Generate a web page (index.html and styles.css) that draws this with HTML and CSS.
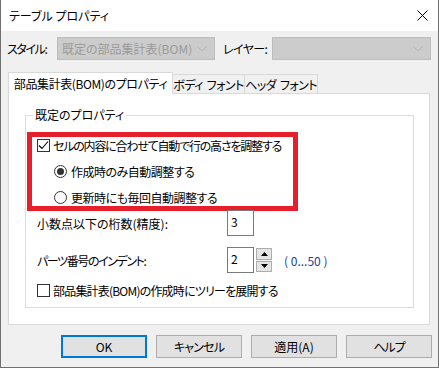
FILE: index.html
```html
<!DOCTYPE html>
<html lang="ja">
<head>
  <meta charset="UTF-8" />
  <title>テーブル プロパティ</title>
  <link rel="stylesheet" href="styles.css">
</head>
<body>
  <div class="window">
    <div class="titlebar">
      <span class="title">テーブル プロパティ</span>
      <svg class="close" width="11" height="11" viewBox="0 0 11 11">
        <path d="M0.5 0.5 L10.5 10.5 M10.5 0.5 L0.5 10.5" stroke="#000" stroke-width="1" fill="none" />
      </svg>
    </div>

    <div class="toolbar">
      <span class="label style-label">スタイル:</span>
      <div class="combo combo-style">
        <span>既定の部品集計表(BOM)</span>
        <svg width="10" height="6" viewBox="0 0 10 6"><path d="M0.5 0.5 L5 5 L9.5 0.5" stroke="#b4b4b4" fill="none" /></svg>
      </div>
      <span class="label layer-label">レイヤー:</span>
      <div class="combo combo-layer">
        <span></span>
        <svg width="10" height="6" viewBox="0 0 10 6"><path d="M0.5 0.5 L5 5 L9.5 0.5" stroke="#b4b4b4" fill="none" /></svg>
      </div>
    </div>

    <div class="tabs">
      <div class="tab active">部品集計表(BOM)のプロパティ</div>
      <div class="tab tab-body">ボディ<span class="gap"></span>フォント</div>
      <div class="tab tab-head">ヘッダ<span class="gap"></span>フォント</div>
    </div>

    <div class="panel">
      <fieldset class="group">
        <legend>既定のプロパティ</legend>

        <div class="highlight">
          <div class="row main">
            <span class="check checked">
              <svg width="11" height="11" viewBox="0 0 11 11"><path d="M1 5.5 L4 8.5 L10 1.5" stroke="#000" stroke-width="1.1" fill="none" /></svg>
            </span>
            <span>セルの内容に合わせて自動で行の高さを調整する</span>
          </div>
          <div class="row sub">
            <span class="radio on"><span class="dot"></span></span>
            <span>作成時のみ自動調整する</span>
          </div>
          <div class="row sub">
            <span class="radio"></span>
            <span>更新時にも毎回自動調整する</span>
          </div>
        </div>

        <div class="field">
          <span class="field-label">小数点以下の桁数(精度):</span>
          <div class="textbox">3</div>
        </div>

        <div class="field field-indent">
          <span class="field-label"><span class="narrow">パーツ番号のインデント:</span></span>
          <div class="textbox">2</div>
          <div class="spin">
            <div class="spin-btn"><svg width="7" height="4" viewBox="0 0 7 4"><path d="M0 4 L3.5 0 L7 4 Z" fill="#000" /></svg></div>
            <div class="spin-btn"><svg width="7" height="4" viewBox="0 0 7 4"><path d="M0 0 L3.5 4 L7 0 Z" fill="#000" /></svg></div>
          </div>
          <span class="range">( 0...50 )</span>
        </div>

        <div class="row tree">
          <span class="check"></span>
          <span>部品集計表(BOM)の作成時にツリーを展開する</span>
        </div>
      </fieldset>
    </div>

    <div class="buttons">
      <button class="btn default">OK</button>
      <button class="btn btn-cancel">キャンセル</button>
      <button class="btn">適用(A)</button>
      <button class="btn btn-help">ヘルプ</button>
    </div>
  </div>
</body>
</html>
```

FILE: styles.css
```css
* {
  margin: 0;
  padding: 0;
  box-sizing: border-box;
}

body {
  font-family: "Noto Sans CJK JP", "Noto Sans", sans-serif;
  font-size: 12px;
  font-feature-settings: "palt";
  color: #000;
  background: #fff;
  white-space: nowrap;
}

.window {
  width: 439px;
  height: 368px;
  background: #f0f0f0;
  border: 1px solid #707070;
  border-top: none;
  display: flex;
  flex-direction: column;
}

.titlebar {
  height: 31px;
  background: #fff;
  display: flex;
  align-items: center;
  justify-content: space-between;
  padding: 0 10px 0 8px;
}

.close {
  display: block;
}

.toolbar {
  display: flex;
  align-items: center;
  height: 23px;
  margin-top: 6px;
  padding-left: 6px;
}

.style-label {
  width: 50px;
  letter-spacing: -1.4px;
}

.layer-label {
  margin-left: 8px;
  width: 49px;
  letter-spacing: -0.6px;
}

.combo {
  height: 23px;
  background: #cccccc;
  border: 1px solid #bcbcbc;
  display: flex;
  align-items: center;
  justify-content: space-between;
  padding: 0 7px 0 4px;
  color: #9a9a9a;
}

.combo-style {
  width: 158px;
}

.combo-layer {
  width: 159px;
}

.tabs {
  display: flex;
  align-items: flex-end;
  margin-top: 11px;
  padding-left: 7px;
  height: 22px;
}

.tab {
  height: 19px;
  border: 1px solid #d9d9d9;
  border-bottom: none;
  background: #f0f0f0;
  display: flex;
  align-items: center;
  justify-content: center;
  margin-left: -1px;
  letter-spacing: -0.6px;
}

.tab .gap {
  display: inline-block;
  width: 4px;
}

.tab.active {
  height: 22px;
  width: 165px;
  margin-left: 0;
  background: #fff;
  position: relative;
  z-index: 1;
  margin-bottom: -1px;
  letter-spacing: -0.4px;
}

.tab-body {
  width: 73px;
}

.tab-head {
  width: 74px;
}

.panel {
  margin-left: 7px;
  width: 422px;
  height: 232px;
  background: #fff;
  border: 1px solid #d9d9d9;
  padding: 13px 15px 16px 16px;
}

.group {
  border: 1px solid #dcdcdc;
  height: 100%;
  padding: 0 0 0 1px;
}

.group legend {
  margin-left: 6px;
  padding: 0 2px;
  line-height: 16px;
}

.highlight {
  width: 271px;
  border: 5px solid #e5202a;
  margin-top: 9px;
  padding: 0 0 1px 5px;
}

.row {
  display: flex;
  align-items: center;
  height: 16px;
  gap: 3px;
}

.row.main {
  letter-spacing: -1.2px;
}

.row.sub {
  margin-top: 10px;
  padding-left: 17px;
  gap: 4px;
  letter-spacing: -0.5px;
}

.check {
  width: 13px;
  height: 13px;
  border: 1px solid #333;
  background: #fff;
  display: flex;
  align-items: center;
  justify-content: center;
  flex: none;
}

.radio {
  width: 13px;
  height: 13px;
  border: 1px solid #333;
  border-radius: 50%;
  background: #fff;
  display: flex;
  align-items: center;
  justify-content: center;
  flex: none;
}

.radio .dot {
  width: 7px;
  height: 7px;
  border-radius: 50%;
  background: #333;
}

.field {
  display: flex;
  align-items: center;
  height: 26px;
  padding-left: 10px;
  margin-top: -1px;
}

.field-indent {
  margin-top: 11px;
}

.field-label {
  width: 190px;
}

.narrow {
  letter-spacing: -1.4px;
}

.textbox {
  width: 27px;
  height: 26px;
  border: 1px solid #7a7a7a;
  background: #fff;
  padding: 2px 0 0 3px;
  line-height: 18px;
}

.spin {
  margin-left: 2px;
  width: 16px;
  height: 24px;
  display: flex;
  flex-direction: column;
  gap: 1px;
  background: #f0f0f0;
}

.spin-btn {
  flex: 1;
  background: #e5e5e5;
  border: 1px solid #adadad;
  display: flex;
  align-items: center;
  justify-content: center;
}

.spin-btn svg {
  display: block;
}

.range {
  margin-left: 12px;
  color: #23418f;
}

.row.tree {
  margin-top: 9px;
  padding-left: 10px;
  letter-spacing: -0.8px;
}

.buttons {
  display: flex;
  justify-content: flex-end;
  gap: 9px;
  margin-top: 10px;
  padding-right: 6px;
}

.btn {
  width: 86px;
  height: 23px;
  background: #e1e1e1;
  border: 1px solid #adadad;
  font-family: inherit;
  font-size: 12px;
  font-feature-settings: "palt";
  color: #000;
}

.btn-cancel {
  letter-spacing: -0.8px;
}

.btn-help {
  letter-spacing: -1px;
}

.btn.default {
  border: 2px solid #0078d7;
}
```
